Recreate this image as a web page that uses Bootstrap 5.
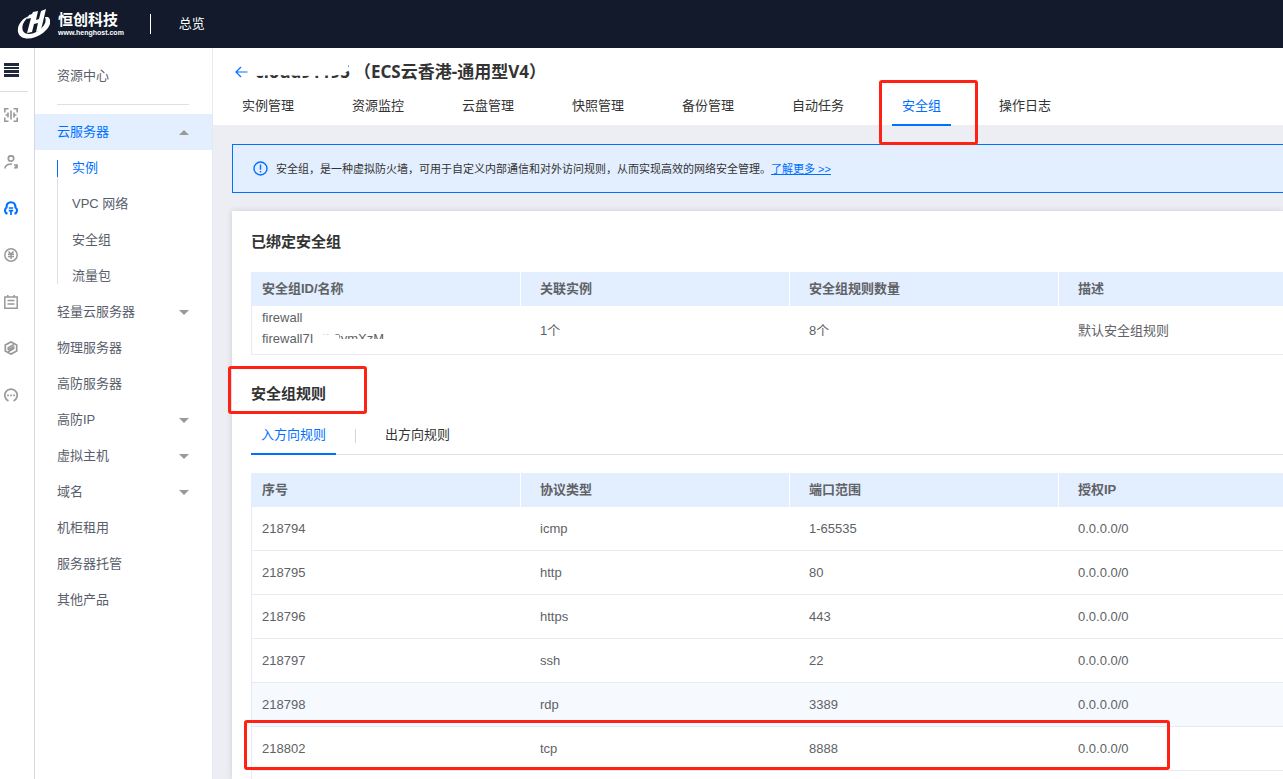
<!DOCTYPE html>
<html lang="zh-CN">
<head>
<meta charset="utf-8">
<meta name="viewport" content="width=device-width, initial-scale=1">
<title>恒创科技 - 安全组</title>
<link href="https://cdn.jsdelivr.net/npm/bootstrap@5.3.0/dist/css/bootstrap.min.css" rel="stylesheet">
<style>
:root{--brand:#0070ff;--tint:#e3efff;--line:#e8eaf3;--ink:#333;--soft:#606266;--note:#ff2113}
body{font:13px/18px "Liberation Sans","Noto Sans CJK SC",sans-serif;color:var(--ink);background:#edeef4}
a{text-decoration:none;color:inherit}
ul{list-style:none;margin:0;padding:0}
.shell{height:100vh;overflow:hidden}
.topbar{height:48px;background:#121a2b;color:#fff;flex:none}
.logo-mark{width:34px;height:32px}
.logo-name{font-size:15px;line-height:18px;font-weight:700}
.logo-site{font:700 7px/8px "Liberation Sans",sans-serif}
.topbar-rule{width:1px;height:20px;background:#fff;margin:0 28px 0 26px}
.rail{width:35px;flex:none;border-right:1px solid #d5d7e2;background:#fff;color:#999}
.rail svg{width:14px;height:14px;display:block}
.rail-menu{width:28px;height:44px;padding:0 0 0 4px;border:0;border-bottom:1px solid #dcdde2;background:none;color:#20283c}
.rail .rail-menu svg{width:15px}
.rail-links{height:326px}
.rail a{display:flex;align-items:center;height:46px;padding-left:4px}
.rail a.on{color:var(--brand)}
.side{width:178px;flex:none;background:#fff;border-right:1px solid #e7e8f0;color:#5a5e6c}
.side-head{height:57px;margin:0 23px 9px 22px;border-bottom:1px solid #dfe0e4;line-height:56px}
.side-link{display:flex;align-items:center;justify-content:space-between;height:36px;padding:0 23px 0 22px}
.side-link.open{background:var(--tint);color:var(--brand)}
.caret{width:0;border:5px solid transparent;border-top-color:#999;border-bottom:0}
.caret.up{border-top:0;border-bottom:5px solid #999}
.side-sub{margin-left:22px;position:relative}
.side-sub::before{content:"";position:absolute;left:0;top:10px;bottom:10px;width:1px;background:#dfe0e4}
.side-sub a{display:block;height:36px;line-height:36px;padding-left:15px}
.side-sub a.on{color:var(--brand)}
.side-sub a.on::before{content:"";position:absolute;left:0;top:10px;width:1px;height:17px;background:var(--brand)}
.page-head{background:#fff;padding:12px 0 0 19px;flex:none}
.page-title{font:700 17px/24px "Noto Sans","Noto Sans CJK SC",sans-serif;margin:0 0 4px}
.back{width:23px;padding-left:3px;color:var(--brand)}
.hidden-part{position:relative;display:inline-block}
.hidden-part svg{position:absolute;left:0;top:0;width:100%;height:100%}
.tabs{margin-bottom:-1px;gap:38px}
.tabs a,.subtabs a{display:block;line-height:36px;padding:0 10px;border-bottom:2px solid transparent;position:relative}
.tabs a.on,.subtabs a.on{color:var(--brand);border-color:var(--brand)}
.tip{height:49px;margin:19px 0 18px 19px;padding-left:20px;border:1px solid var(--brand);border-right:0;background:var(--tint);font-size:11px;flex:none}
.tip a{color:var(--brand);text-decoration:underline}
.panel{margin-left:19px;padding:20px 0 0 19px;background:#fff;box-shadow:0 0 6px rgba(40,40,70,.16)}
.panel h2{font-size:15px;line-height:22px;font-weight:700;margin:0 0 19px}
.panel h2.second{margin:28px 0 12px;position:relative}
.grid{width:100%;table-layout:fixed;border-collapse:separate;border-spacing:0;color:var(--soft)}
.grid col.std{width:269px}
.grid th{height:34px;background:var(--tint);font-weight:700;padding:0 0 0 19px;border-left:1px solid #fff}
.grid th:first-child{border-left-color:var(--tint);padding-left:10px}
.grid td{height:44px;padding:0 0 0 20px;border-bottom:1px solid var(--line)}
.grid td:first-child{border-left:1px solid var(--line);padding-left:10px;position:relative}
.grid .tall td{height:49px;line-height:21px}
.grid .tall td:first-child{padding-bottom:4px}
.grid .hover td{background:#f6f9fe}
.subtabs{border-bottom:1px solid #dfe1e6;margin-bottom:18px}
.subtabs a{margin-bottom:-1px}
.subtabs-rule{width:1px;height:14px;background:#d5d7dd;margin:0 19px}
.rest{border-left:1px solid var(--line)}
.frame{position:absolute;border:3px solid var(--note);border-radius:3px;z-index:2;pointer-events:none}
.frame-tab{left:-13px;right:-27px;top:-8px;bottom:-21px}
.frame-title{left:-23px;width:139px;top:-17px;bottom:-9px}
.frame-row{left:-8px;width:926px;top:-7px;height:50px}
</style>
</head>
<body>
<div class="shell d-flex flex-column">
<header class="topbar d-flex align-items-center">
  <a href="#" class="d-flex align-items-center">
    <svg class="logo-mark ms-3 me-2" viewBox="0 0 34 32" fill="#fff" aria-hidden="true">
      <path d="M14 8C6 10 1 17 2 24c2 9 16 8 25 1 8-6 9-13 5-16l-3 0c2 5-1 10-7 14-6 4-13 4-15 0-2-5 1-11 7-15z"/>
      <path d="M17 4l5-1-2 9 3-1 2-8 5-2-5 21-5 2 2-9-4 1-2 8-5 1 4-15-4 1 2-4 3-1z"/>
    </svg>
    <span><span class="logo-name d-block">恒创科技</span><span class="logo-site d-block">www.henghost.com</span></span>
  </a>
  <span class="topbar-rule"></span>
  <a href="#">总览</a>
</header>
<div class="d-flex flex-grow-1">
  <nav class="rail" aria-label="快捷导航">
    <button class="rail-menu d-block" aria-label="菜单"><svg viewBox="0 0 15 14" fill="currentColor"><path d="M0 0h15v3H0zM0 4h15v2H0zM0 7h15v3H0zM0 11h15v3H0z"/></svg></button>
    <div class="rail-links d-flex flex-column justify-content-between">
    <a href="#" aria-label="总览"><svg viewBox="0 0 14 14" fill="none" stroke="currentColor" stroke-width="1.6"><path d="M.8 4.500V.8h3.700M9.500 .8h3.700v3.700M13.200 9.500v3.700H9.500M4.500 13.200H.8V9.500M7 2.500v9M4 4.500v5M10 4.500v5M1.500 7H4M10 7h2.500"/></svg></a>
    <a href="#" aria-label="用户"><svg viewBox="0 0 14 14" fill="none" stroke="currentColor" stroke-width="1.700"><circle cx="7" cy="3.500" r="2.700"/><path d="M.9 13.500c.3-3.200 2.500-4.500 7.100-4.500M10.500 13.500l2.500-3M10 10h3v3.500"/></svg></a>
    <a href="#" class="on" aria-label="云产品"><svg viewBox="0 0 14 14" fill="none" stroke="currentColor" stroke-width="2.100"><path d="M3.500 12.600C.6 12 .2 8.500 2.500 6.500 2.500 3 4.500 1.200 7 1.200s4.500 1.800 4.500 5.300C13.800 8.500 13.400 12 10.500 12.600"/><path d="M4.800 7h4.400M4.800 9.700h4.400M7 9.700V14" stroke-width="1.700"/></svg></a>
    <a href="#" aria-label="财务"><svg viewBox="0 0 14 14" fill="none" stroke="currentColor" stroke-width="1.500"><circle cx="7" cy="7" r="6.200"/><path d="M4.500 3.500L7 6l2.500-2.500M4 6.300h6M4 8.600h6M7 6v5"/></svg></a>
    <a href="#" aria-label="工单"><svg viewBox="0 0 14 14" fill="none" stroke="currentColor" stroke-width="1.500"><path d="M.8 2h12.400v11.200H.8zM3.800 0v2M10.200 0v2M3.500 5.500h7M3.500 9h7"/></svg></a>
    <a href="#" aria-label="服务"><svg viewBox="0 0 14 14" fill="none" stroke="currentColor" stroke-width="1.700"><path d="M4 11.500l-2.700-1.600V4L7 .9l3 1.700M10 2.500l2.700 1.500v6L7 13.100l-3-1.600M10 3.500L4.300 6.700v2.200M9.700 5.200v2.300L4.300 10.700M4.500 8.900l5-2.800"/></svg></a>
    <a href="#" aria-label="消息"><svg viewBox="0 0 14 14" fill="none" stroke="currentColor" stroke-width="1.700"><path d="M4.500 12.900a6.200 6.200 0 1 1 5 0"/><path d="M3.200 7.300h1.700M6.200 7.300h1.700M9.200 7.300h1.700"/></svg></a>
    </div>
  </nav>
  <nav class="side" aria-label="资源中心">
    <div class="side-head">资源中心</div>
    <a href="#" class="side-link open">云服务器<i class="caret up"></i></a>
    <ul class="side-sub">
      <li><a href="#" class="on">实例</a></li>
      <li><a href="#">VPC 网络</a></li>
      <li><a href="#">安全组</a></li>
      <li><a href="#">流量包</a></li>
    </ul>
    <a href="#" class="side-link">轻量云服务器<i class="caret"></i></a>
    <a href="#" class="side-link">物理服务器</a>
    <a href="#" class="side-link">高防服务器</a>
    <a href="#" class="side-link">高防IP<i class="caret"></i></a>
    <a href="#" class="side-link">虚拟主机<i class="caret"></i></a>
    <a href="#" class="side-link">域名<i class="caret"></i></a>
    <a href="#" class="side-link">机柜租用</a>
    <a href="#" class="side-link">服务器托管</a>
    <a href="#" class="side-link">其他产品</a>
  </nav>
  <main class="d-flex flex-column flex-grow-1 overflow-hidden">
    <div class="page-head">
      <h1 class="page-title d-flex align-items-center">
        <a href="#" class="back d-flex" aria-label="返回"><svg width="13" height="12" viewBox="0 0 13 12" fill="none" stroke="currentColor" stroke-width="1.200"><path d="M12.500 6H1M6 1L1 6l5 5"/></svg></a>
        <span class="hidden-part me-1">cloud91195<svg viewBox="0 0 100 24" preserveAspectRatio="none" fill="#fff" aria-hidden="true"><path d="M0 0h100v5H98v6l-8 4-30 1-40-1-20 1z"/></svg></span>
        <span>（ECS云香港-通用型V4）</span>
      </h1>
      <nav class="tabs d-flex">
        <a href="#">实例管理</a><a href="#">资源监控</a><a href="#">云盘管理</a><a href="#">快照管理</a><a href="#">备份管理</a><a href="#">自动任务</a>
        <a href="#" class="on">安全组<span class="frame frame-tab"></span></a>
        <a href="#">操作日志</a>
      </nav>
    </div>
    <div class="tip d-flex align-items-center">
      <svg class="me-2" width="15" height="15" viewBox="0 0 15 15" fill="none" stroke="#0070ff" stroke-width="1.400" aria-hidden="true"><circle cx="7.500" cy="7.500" r="6.500"/><path d="M7.500 3.500v5.200M7.500 10v1.500"/></svg>
      <span>安全组，是一种虚拟防火墙，可用于自定义内部通信和对外访问规则，从而实现高效的网络安全管理。<a href="#">了解更多 &gt;&gt;</a></span>
    </div>
    <section class="panel d-flex flex-column flex-grow-1">
      <h2>已绑定安全组</h2>
      <table class="grid">
        <colgroup><col class="std"><col class="std"><col class="std"><col></colgroup>
        <thead><tr><th>安全组ID/名称</th><th>关联实例</th><th>安全组规则数量</th><th>描述</th></tr></thead>
        <tbody><tr class="tall"><td>firewall<br>firewall7<span class="hidden-part">IxJb8ymXzM<svg viewBox="0 0 74 21" preserveAspectRatio="none" fill="#fff" aria-hidden="true"><path d="M3 0h8v6l18 1v4h45v10H3z"/></svg></span></td><td>1个</td><td>8个</td><td>默认安全组规则</td></tr></tbody>
      </table>
      <h2 class="second">安全组规则<span class="frame frame-title"></span></h2>
      <nav class="subtabs d-flex align-items-center">
        <a href="#" class="on">入方向规则</a><span class="subtabs-rule"></span><a href="#">出方向规则</a>
      </nav>
      <table class="grid">
        <colgroup><col class="std"><col class="std"><col class="std"><col></colgroup>
        <thead><tr><th>序号</th><th>协议类型</th><th>端口范围</th><th>授权IP</th></tr></thead>
        <tbody>
          <tr><td>218794</td><td>icmp</td><td>1-65535</td><td>0.0.0.0/0</td></tr>
          <tr><td>218795</td><td>http</td><td>80</td><td>0.0.0.0/0</td></tr>
          <tr><td>218796</td><td>https</td><td>443</td><td>0.0.0.0/0</td></tr>
          <tr><td>218797</td><td>ssh</td><td>22</td><td>0.0.0.0/0</td></tr>
          <tr class="hover"><td>218798</td><td>rdp</td><td>3389</td><td>0.0.0.0/0</td></tr>
          <tr><td>218802<span class="frame frame-row"></span></td><td>tcp</td><td>8888</td><td>0.0.0.0/0</td></tr>
        </tbody>
      </table>
      <div class="rest flex-grow-1"></div>
    </section>
  </main>
</div>
</div>
<script src="https://cdn.jsdelivr.net/npm/bootstrap@5.3.0/dist/js/bootstrap.bundle.min.js"></script>
</body>
</html>
